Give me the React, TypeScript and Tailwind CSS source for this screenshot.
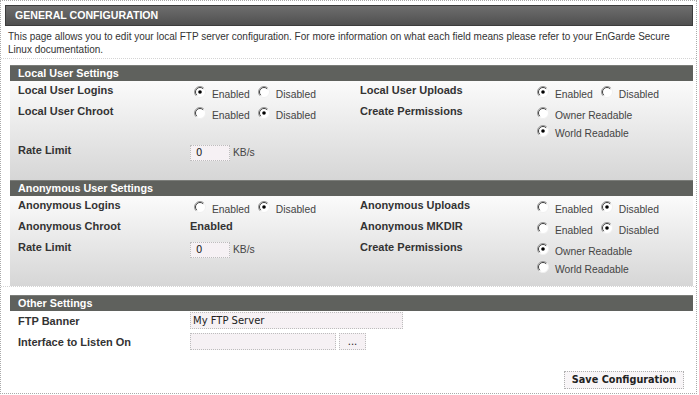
import React from "react"

function Radio({ checked }: { checked?: boolean }) {
    return (
        <svg width="12" height="12" viewBox="0 0 12 12" className="-mt-[2px] shrink-0">
            <circle cx="6" cy="6" r="5.5" fill="#ffffff" />
            <path d="M2.1 9.9 A5.5 5.5 0 0 1 9.9 2.1" stroke="#9a9a9a" strokeWidth="1" fill="none" />
            <path d="M2.8 9.2 A4.5 4.5 0 0 1 9.2 2.8" stroke="#404040" strokeWidth="1" fill="none" />
            <path d="M9.9 2.1 A5.5 5.5 0 0 1 2.1 9.9" stroke="#f0f0f0" strokeWidth="1" fill="none" />
            {checked && <circle cx="6" cy="6" r="1.8" fill="#000000" />}
        </svg>
    )
}

function Option({ label, checked, first }: { label: string; checked?: boolean; first?: boolean }) {
    return (
        <div className={first ? "flex items-start ml-[4px]" : "flex items-start ml-[8px]"}>
            <Radio checked={checked} />
            <span className="ml-[6px] leading-[14px] text-[#444]">{label}</span>
        </div>
    )
}

function EnableDisable({ enabled }: { enabled: boolean }) {
    return (
        <div className="flex pt-[7px]">
            <Option label="Enabled" checked={enabled} first />
            <Option label="Disabled" checked={!enabled} />
        </div>
    )
}

function Permissions({ owner }: { owner: boolean }) {
    return (
        <div className="flex flex-col gap-[4px] pt-[7px]">
            <Option label="Owner Readable" checked={owner} first />
            <Option label="World Readable" checked={!owner} first />
        </div>
    )
}

function Label({ children }: { children: React.ReactNode }) {
    return <div className="pt-[2px] leading-[14px] font-bold text-[11px] text-[#333]">{children}</div>
}

function RateLimit() {
    return (
        <div className="flex items-center pt-[4px]">
            <div className="w-[40px] h-[16px] bg-[#f6f1f4] border border-dotted border-[#bdbdbd] pl-[5px] leading-[14px] font-['DejaVu_Sans'] text-[10px] text-[#222]">
                0
            </div>
            <span className="ml-[3px] text-[#444]">KB/s</span>
        </div>
    )
}

function SectionHeader({ title }: { title: string }) {
    return (
        <div className="h-[16px] bg-[#5f615d] border-t border-[#7b7d79] pl-[8px] leading-[15px] font-bold text-[10.8px] text-white">
            {title}
        </div>
    )
}

const row = "grid grid-cols-[172px_170px_173px_1fr] items-start pl-[8px]"

export default function App() {
    return (
        <div className="w-[699px] h-[395px] bg-white font-['Liberation_Sans',Arial,sans-serif] text-[10.3px]">
            <div className="w-[697px] h-[394px] border border-dotted border-[#aaaaaa] pt-[4px] flex flex-col">
                <div className="ml-[4px] mr-[3px] h-[21px] bg-gradient-to-b from-[#6e6e6e] to-[#505050] border border-[#3c3c3c] pl-[9px] leading-[19px] font-bold text-[10.6px] text-white">
                    GENERAL CONFIGURATION
                </div>
                <p className="mt-[4px] pl-[7px] pr-[4px] pb-[2px] leading-[13px] text-[10px] text-[#333] border-b border-dotted border-[#d4d4d4]">
                    This page allows you to edit your local FTP server configuration. For more information on what each field means please refer to your EnGarde Secure Linux documentation.
                </p>

                <div className="ml-[9px] mr-[3px] mt-[6px]">
                    <SectionHeader title="Local User Settings" />
                    <div className="h-[99px] bg-gradient-to-b from-[#fbfbfb] to-[#d6d6d6]">
                        <div className={row}>
                            <Label>Local User Logins</Label>
                            <EnableDisable enabled />
                            <Label>Local User Uploads</Label>
                            <EnableDisable enabled />
                        </div>
                        <div className={row}>
                            <Label>Local User Chroot</Label>
                            <EnableDisable enabled={false} />
                            <Label>Create Permissions</Label>
                            <Permissions owner={false} />
                        </div>
                        <div className={row}>
                            <Label>Rate Limit</Label>
                            <RateLimit />
                        </div>
                    </div>

                    <SectionHeader title="Anonymous User Settings" />
                    <div className="h-[90px] bg-gradient-to-b from-[#fbfbfb] to-[#d6d6d6]">
                        <div className={row}>
                            <Label>Anonymous Logins</Label>
                            <EnableDisable enabled={false} />
                            <Label>Anonymous Uploads</Label>
                            <EnableDisable enabled={false} />
                        </div>
                        <div className={row}>
                            <Label>Anonymous Chroot</Label>
                            <Label>Enabled</Label>
                            <Label>Anonymous MKDIR</Label>
                            <EnableDisable enabled={false} />
                        </div>
                        <div className={row}>
                            <Label>Rate Limit</Label>
                            <RateLimit />
                            <Label>Create Permissions</Label>
                            <Permissions owner />
                        </div>
                    </div>
                </div>

                <div className="border-b border-dotted border-[#d4d4d4]" />

                <div className="ml-[9px] mr-[3px] mt-[8px]">
                    <SectionHeader title="Other Settings" />
                    <div className="flex flex-col gap-[4px] pt-[1px]">
                        <div className="grid grid-cols-[172px_1fr] pl-[8px] items-center">
                            <div className="font-bold text-[11px] text-[#333] leading-[14px]">FTP Banner</div>
                            <div className="w-[213px] h-[17px] bg-[#f6f1f4] border border-dotted border-[#bdbdbd] pl-[2px] leading-[15px] font-['DejaVu_Sans'] text-[10px] text-[#222]">
                                My FTP Server
                            </div>
                        </div>
                        <div className="grid grid-cols-[172px_1fr] pl-[8px] items-center">
                            <div className="font-bold text-[11px] text-[#333] leading-[14px]">Interface to Listen On</div>
                            <div className="flex">
                                <div className="w-[146px] h-[17px] bg-[#f6f1f4] border border-dotted border-[#bdbdbd]" />
                                <div className="ml-[3px] w-[27px] h-[17px] bg-[#f6f1f4] border border-dotted border-[#bdbdbd] flex items-center justify-center font-['DejaVu_Sans'] text-[10px] text-[#222]">
                                    ...
                                </div>
                            </div>
                        </div>
                    </div>
                </div>

                <div className="flex justify-end mt-[21px] mr-[12px]">
                    <button className="w-[120px] h-[18px] bg-[#f8f5f7] border border-dotted border-[#b0b0b0] font-['DejaVu_Sans'] font-bold text-[9.7px] text-[#222] leading-[16px]">
                        Save Configuration
                    </button>
                </div>
            </div>
        </div>
    )
}
